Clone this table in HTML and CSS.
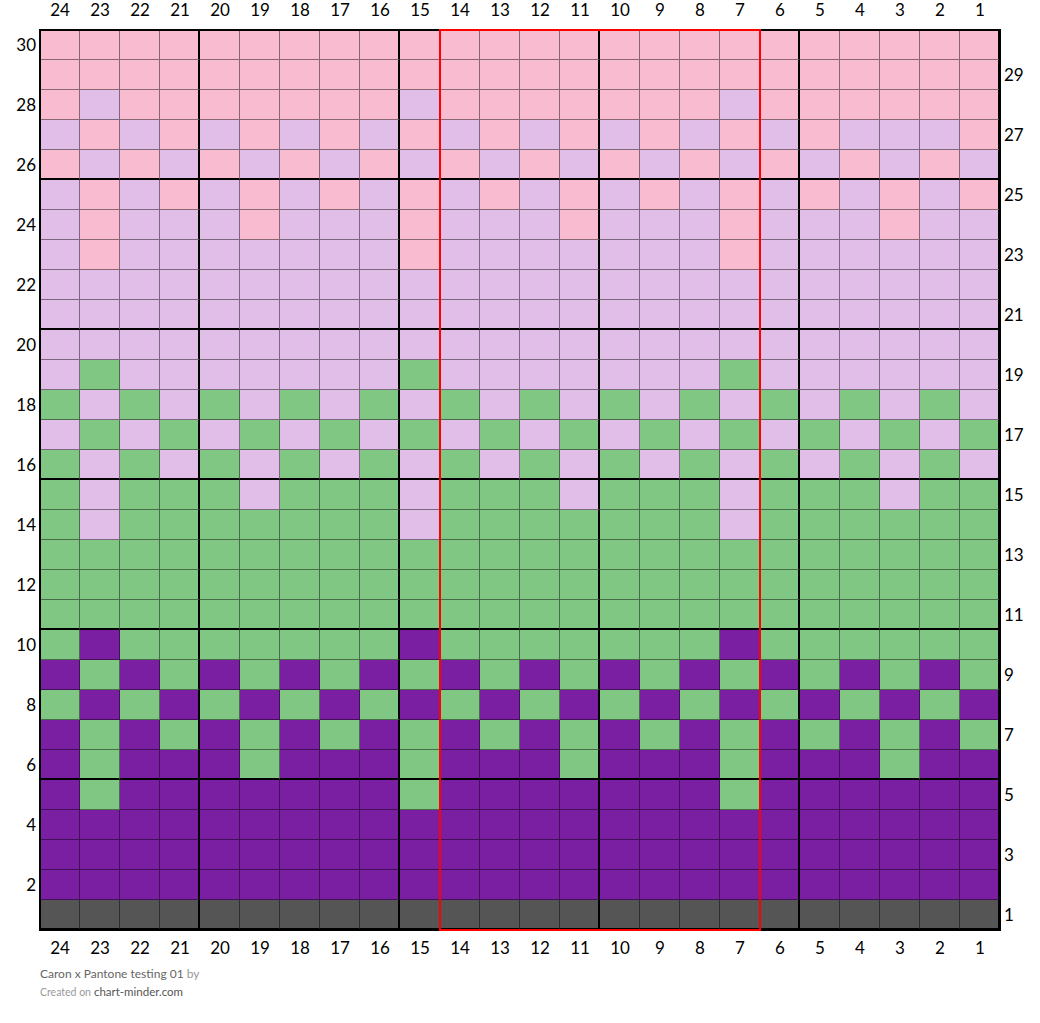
FILE: index.html
```html
<!DOCTYPE html>
<html>
<head>
<meta charset="utf-8">
<title>Caron x Pantone testing 01</title>
<link rel="stylesheet" href="styles.css">
</head>
<body>
<div class="page">
  <div class="corner"></div>
  <div class="cols top">
    <span>24</span><span>23</span><span>22</span><span>21</span><span>20</span><span>19</span><span>18</span><span>17</span><span>16</span><span>15</span><span>14</span><span>13</span><span>12</span><span>11</span><span>10</span><span>9</span><span>8</span><span>7</span><span>6</span><span>5</span><span>4</span><span>3</span><span>2</span><span>1</span>
  </div>
  <div class="corner"></div>

  <div class="rows left">
    <span>30</span><span></span><span>28</span><span></span><span>26</span><span></span><span>24</span><span></span><span>22</span><span></span><span>20</span><span></span><span>18</span><span></span><span>16</span><span></span><span>14</span><span></span><span>12</span><span></span><span>10</span><span></span><span>8</span><span></span><span>6</span><span></span><span>4</span><span></span><span>2</span><span></span>
  </div>

  <div class="chart">
    <!-- 30 -->
    <div class="r"><i class="p"></i><i class="p"></i><i class="p"></i><i class="p"></i><i class="p"></i><i class="p"></i><i class="p"></i><i class="p"></i><i class="p"></i><i class="p"></i><i class="p"></i><i class="p"></i><i class="p"></i><i class="p"></i><i class="p"></i><i class="p"></i><i class="p"></i><i class="p"></i><i class="p"></i><i class="p"></i><i class="p"></i><i class="p"></i><i class="p"></i><i class="p"></i></div>
    <!-- 29 -->
    <div class="r"><i class="p"></i><i class="p"></i><i class="p"></i><i class="p"></i><i class="p"></i><i class="p"></i><i class="p"></i><i class="p"></i><i class="p"></i><i class="p"></i><i class="p"></i><i class="p"></i><i class="p"></i><i class="p"></i><i class="p"></i><i class="p"></i><i class="p"></i><i class="p"></i><i class="p"></i><i class="p"></i><i class="p"></i><i class="p"></i><i class="p"></i><i class="p"></i></div>
    <!-- 28 -->
    <div class="r"><i class="p"></i><i class="l"></i><i class="p"></i><i class="p"></i><i class="p"></i><i class="p"></i><i class="p"></i><i class="p"></i><i class="p"></i><i class="l"></i><i class="p"></i><i class="p"></i><i class="p"></i><i class="p"></i><i class="p"></i><i class="p"></i><i class="p"></i><i class="l"></i><i class="p"></i><i class="p"></i><i class="p"></i><i class="p"></i><i class="p"></i><i class="p"></i></div>
    <!-- 27 -->
    <div class="r"><i class="l"></i><i class="p"></i><i class="l"></i><i class="p"></i><i class="l"></i><i class="p"></i><i class="l"></i><i class="p"></i><i class="l"></i><i class="p"></i><i class="l"></i><i class="p"></i><i class="l"></i><i class="p"></i><i class="l"></i><i class="p"></i><i class="l"></i><i class="p"></i><i class="l"></i><i class="p"></i><i class="l"></i><i class="l"></i><i class="l"></i><i class="p"></i></div>
    <!-- 26 -->
    <div class="r"><i class="p"></i><i class="l"></i><i class="p"></i><i class="l"></i><i class="p"></i><i class="l"></i><i class="p"></i><i class="l"></i><i class="p"></i><i class="l"></i><i class="p"></i><i class="l"></i><i class="p"></i><i class="l"></i><i class="p"></i><i class="l"></i><i class="p"></i><i class="l"></i><i class="p"></i><i class="l"></i><i class="p"></i><i class="l"></i><i class="p"></i><i class="l"></i></div>
    <!-- 25 -->
    <div class="r"><i class="l"></i><i class="p"></i><i class="l"></i><i class="p"></i><i class="l"></i><i class="p"></i><i class="l"></i><i class="p"></i><i class="l"></i><i class="p"></i><i class="l"></i><i class="p"></i><i class="l"></i><i class="p"></i><i class="l"></i><i class="p"></i><i class="l"></i><i class="p"></i><i class="l"></i><i class="p"></i><i class="l"></i><i class="p"></i><i class="l"></i><i class="p"></i></div>
    <!-- 24 -->
    <div class="r"><i class="l"></i><i class="p"></i><i class="l"></i><i class="l"></i><i class="l"></i><i class="p"></i><i class="l"></i><i class="l"></i><i class="l"></i><i class="p"></i><i class="l"></i><i class="l"></i><i class="l"></i><i class="p"></i><i class="l"></i><i class="l"></i><i class="l"></i><i class="p"></i><i class="l"></i><i class="l"></i><i class="l"></i><i class="p"></i><i class="l"></i><i class="l"></i></div>
    <!-- 23 -->
    <div class="r"><i class="l"></i><i class="p"></i><i class="l"></i><i class="l"></i><i class="l"></i><i class="l"></i><i class="l"></i><i class="l"></i><i class="l"></i><i class="p"></i><i class="l"></i><i class="l"></i><i class="l"></i><i class="l"></i><i class="l"></i><i class="l"></i><i class="l"></i><i class="p"></i><i class="l"></i><i class="l"></i><i class="l"></i><i class="l"></i><i class="l"></i><i class="l"></i></div>
    <!-- 22 -->
    <div class="r"><i class="l"></i><i class="l"></i><i class="l"></i><i class="l"></i><i class="l"></i><i class="l"></i><i class="l"></i><i class="l"></i><i class="l"></i><i class="l"></i><i class="l"></i><i class="l"></i><i class="l"></i><i class="l"></i><i class="l"></i><i class="l"></i><i class="l"></i><i class="l"></i><i class="l"></i><i class="l"></i><i class="l"></i><i class="l"></i><i class="l"></i><i class="l"></i></div>
    <!-- 21 -->
    <div class="r"><i class="l"></i><i class="l"></i><i class="l"></i><i class="l"></i><i class="l"></i><i class="l"></i><i class="l"></i><i class="l"></i><i class="l"></i><i class="l"></i><i class="l"></i><i class="l"></i><i class="l"></i><i class="l"></i><i class="l"></i><i class="l"></i><i class="l"></i><i class="l"></i><i class="l"></i><i class="l"></i><i class="l"></i><i class="l"></i><i class="l"></i><i class="l"></i></div>
    <!-- 20 -->
    <div class="r"><i class="l"></i><i class="l"></i><i class="l"></i><i class="l"></i><i class="l"></i><i class="l"></i><i class="l"></i><i class="l"></i><i class="l"></i><i class="l"></i><i class="l"></i><i class="l"></i><i class="l"></i><i class="l"></i><i class="l"></i><i class="l"></i><i class="l"></i><i class="l"></i><i class="l"></i><i class="l"></i><i class="l"></i><i class="l"></i><i class="l"></i><i class="l"></i></div>
    <!-- 19 -->
    <div class="r"><i class="l"></i><i class="g"></i><i class="l"></i><i class="l"></i><i class="l"></i><i class="l"></i><i class="l"></i><i class="l"></i><i class="l"></i><i class="g"></i><i class="l"></i><i class="l"></i><i class="l"></i><i class="l"></i><i class="l"></i><i class="l"></i><i class="l"></i><i class="g"></i><i class="l"></i><i class="l"></i><i class="l"></i><i class="l"></i><i class="l"></i><i class="l"></i></div>
    <!-- 18 -->
    <div class="r"><i class="g"></i><i class="l"></i><i class="g"></i><i class="l"></i><i class="g"></i><i class="l"></i><i class="g"></i><i class="l"></i><i class="g"></i><i class="l"></i><i class="g"></i><i class="l"></i><i class="g"></i><i class="l"></i><i class="g"></i><i class="l"></i><i class="g"></i><i class="l"></i><i class="g"></i><i class="l"></i><i class="g"></i><i class="l"></i><i class="g"></i><i class="l"></i></div>
    <!-- 17 -->
    <div class="r"><i class="l"></i><i class="g"></i><i class="l"></i><i class="g"></i><i class="l"></i><i class="g"></i><i class="l"></i><i class="g"></i><i class="l"></i><i class="g"></i><i class="l"></i><i class="g"></i><i class="l"></i><i class="g"></i><i class="l"></i><i class="g"></i><i class="l"></i><i class="g"></i><i class="l"></i><i class="g"></i><i class="l"></i><i class="g"></i><i class="l"></i><i class="g"></i></div>
    <!-- 16 -->
    <div class="r"><i class="g"></i><i class="l"></i><i class="g"></i><i class="l"></i><i class="g"></i><i class="l"></i><i class="g"></i><i class="l"></i><i class="g"></i><i class="l"></i><i class="g"></i><i class="l"></i><i class="g"></i><i class="l"></i><i class="g"></i><i class="l"></i><i class="g"></i><i class="l"></i><i class="g"></i><i class="l"></i><i class="g"></i><i class="l"></i><i class="g"></i><i class="l"></i></div>
    <!-- 15 -->
    <div class="r"><i class="g"></i><i class="l"></i><i class="g"></i><i class="g"></i><i class="g"></i><i class="l"></i><i class="g"></i><i class="g"></i><i class="g"></i><i class="l"></i><i class="g"></i><i class="g"></i><i class="g"></i><i class="l"></i><i class="g"></i><i class="g"></i><i class="g"></i><i class="l"></i><i class="g"></i><i class="g"></i><i class="g"></i><i class="l"></i><i class="g"></i><i class="g"></i></div>
    <!-- 14 -->
    <div class="r"><i class="g"></i><i class="l"></i><i class="g"></i><i class="g"></i><i class="g"></i><i class="g"></i><i class="g"></i><i class="g"></i><i class="g"></i><i class="l"></i><i class="g"></i><i class="g"></i><i class="g"></i><i class="g"></i><i class="g"></i><i class="g"></i><i class="g"></i><i class="l"></i><i class="g"></i><i class="g"></i><i class="g"></i><i class="g"></i><i class="g"></i><i class="g"></i></div>
    <!-- 13 -->
    <div class="r"><i class="g"></i><i class="g"></i><i class="g"></i><i class="g"></i><i class="g"></i><i class="g"></i><i class="g"></i><i class="g"></i><i class="g"></i><i class="g"></i><i class="g"></i><i class="g"></i><i class="g"></i><i class="g"></i><i class="g"></i><i class="g"></i><i class="g"></i><i class="g"></i><i class="g"></i><i class="g"></i><i class="g"></i><i class="g"></i><i class="g"></i><i class="g"></i></div>
    <!-- 12 -->
    <div class="r"><i class="g"></i><i class="g"></i><i class="g"></i><i class="g"></i><i class="g"></i><i class="g"></i><i class="g"></i><i class="g"></i><i class="g"></i><i class="g"></i><i class="g"></i><i class="g"></i><i class="g"></i><i class="g"></i><i class="g"></i><i class="g"></i><i class="g"></i><i class="g"></i><i class="g"></i><i class="g"></i><i class="g"></i><i class="g"></i><i class="g"></i><i class="g"></i></div>
    <!-- 11 -->
    <div class="r"><i class="g"></i><i class="g"></i><i class="g"></i><i class="g"></i><i class="g"></i><i class="g"></i><i class="g"></i><i class="g"></i><i class="g"></i><i class="g"></i><i class="g"></i><i class="g"></i><i class="g"></i><i class="g"></i><i class="g"></i><i class="g"></i><i class="g"></i><i class="g"></i><i class="g"></i><i class="g"></i><i class="g"></i><i class="g"></i><i class="g"></i><i class="g"></i></div>
    <!-- 10 -->
    <div class="r"><i class="g"></i><i class="u"></i><i class="g"></i><i class="g"></i><i class="g"></i><i class="g"></i><i class="g"></i><i class="g"></i><i class="g"></i><i class="u"></i><i class="g"></i><i class="g"></i><i class="g"></i><i class="g"></i><i class="g"></i><i class="g"></i><i class="g"></i><i class="u"></i><i class="g"></i><i class="g"></i><i class="g"></i><i class="g"></i><i class="g"></i><i class="g"></i></div>
    <!-- 9 -->
    <div class="r"><i class="u"></i><i class="g"></i><i class="u"></i><i class="g"></i><i class="u"></i><i class="g"></i><i class="u"></i><i class="g"></i><i class="u"></i><i class="g"></i><i class="u"></i><i class="g"></i><i class="u"></i><i class="g"></i><i class="u"></i><i class="g"></i><i class="u"></i><i class="g"></i><i class="u"></i><i class="g"></i><i class="u"></i><i class="g"></i><i class="u"></i><i class="g"></i></div>
    <!-- 8 -->
    <div class="r"><i class="g"></i><i class="u"></i><i class="g"></i><i class="u"></i><i class="g"></i><i class="u"></i><i class="g"></i><i class="u"></i><i class="g"></i><i class="u"></i><i class="g"></i><i class="u"></i><i class="g"></i><i class="u"></i><i class="g"></i><i class="u"></i><i class="g"></i><i class="u"></i><i class="g"></i><i class="u"></i><i class="g"></i><i class="u"></i><i class="g"></i><i class="u"></i></div>
    <!-- 7 -->
    <div class="r"><i class="u"></i><i class="g"></i><i class="u"></i><i class="g"></i><i class="u"></i><i class="g"></i><i class="u"></i><i class="g"></i><i class="u"></i><i class="g"></i><i class="u"></i><i class="g"></i><i class="u"></i><i class="g"></i><i class="u"></i><i class="g"></i><i class="u"></i><i class="g"></i><i class="u"></i><i class="g"></i><i class="u"></i><i class="g"></i><i class="u"></i><i class="g"></i></div>
    <!-- 6 -->
    <div class="r"><i class="u"></i><i class="g"></i><i class="u"></i><i class="u"></i><i class="u"></i><i class="g"></i><i class="u"></i><i class="u"></i><i class="u"></i><i class="g"></i><i class="u"></i><i class="u"></i><i class="u"></i><i class="g"></i><i class="u"></i><i class="u"></i><i class="u"></i><i class="g"></i><i class="u"></i><i class="u"></i><i class="u"></i><i class="g"></i><i class="u"></i><i class="u"></i></div>
    <!-- 5 -->
    <div class="r"><i class="u"></i><i class="g"></i><i class="u"></i><i class="u"></i><i class="u"></i><i class="u"></i><i class="u"></i><i class="u"></i><i class="u"></i><i class="g"></i><i class="u"></i><i class="u"></i><i class="u"></i><i class="u"></i><i class="u"></i><i class="u"></i><i class="u"></i><i class="g"></i><i class="u"></i><i class="u"></i><i class="u"></i><i class="u"></i><i class="u"></i><i class="u"></i></div>
    <!-- 4 -->
    <div class="r"><i class="u"></i><i class="u"></i><i class="u"></i><i class="u"></i><i class="u"></i><i class="u"></i><i class="u"></i><i class="u"></i><i class="u"></i><i class="u"></i><i class="u"></i><i class="u"></i><i class="u"></i><i class="u"></i><i class="u"></i><i class="u"></i><i class="u"></i><i class="u"></i><i class="u"></i><i class="u"></i><i class="u"></i><i class="u"></i><i class="u"></i><i class="u"></i></div>
    <!-- 3 -->
    <div class="r"><i class="u"></i><i class="u"></i><i class="u"></i><i class="u"></i><i class="u"></i><i class="u"></i><i class="u"></i><i class="u"></i><i class="u"></i><i class="u"></i><i class="u"></i><i class="u"></i><i class="u"></i><i class="u"></i><i class="u"></i><i class="u"></i><i class="u"></i><i class="u"></i><i class="u"></i><i class="u"></i><i class="u"></i><i class="u"></i><i class="u"></i><i class="u"></i></div>
    <!-- 2 -->
    <div class="r"><i class="u"></i><i class="u"></i><i class="u"></i><i class="u"></i><i class="u"></i><i class="u"></i><i class="u"></i><i class="u"></i><i class="u"></i><i class="u"></i><i class="u"></i><i class="u"></i><i class="u"></i><i class="u"></i><i class="u"></i><i class="u"></i><i class="u"></i><i class="u"></i><i class="u"></i><i class="u"></i><i class="u"></i><i class="u"></i><i class="u"></i><i class="u"></i></div>
    <!-- 1 -->
    <div class="r"><i class="k"></i><i class="k"></i><i class="k"></i><i class="k"></i><i class="k"></i><i class="k"></i><i class="k"></i><i class="k"></i><i class="k"></i><i class="k"></i><i class="k"></i><i class="k"></i><i class="k"></i><i class="k"></i><i class="k"></i><i class="k"></i><i class="k"></i><i class="k"></i><i class="k"></i><i class="k"></i><i class="k"></i><i class="k"></i><i class="k"></i><i class="k"></i></div>
    <div class="repeat"></div>
  </div>

  <div class="rows right">
    <span></span><span>29</span><span></span><span>27</span><span></span><span>25</span><span></span><span>23</span><span></span><span>21</span><span></span><span>19</span><span></span><span>17</span><span></span><span>15</span><span></span><span>13</span><span></span><span>11</span><span></span><span>9</span><span></span><span>7</span><span></span><span>5</span><span></span><span>3</span><span></span><span>1</span>
  </div>

  <div class="corner"></div>
  <div class="cols bottom">
    <span>24</span><span>23</span><span>22</span><span>21</span><span>20</span><span>19</span><span>18</span><span>17</span><span>16</span><span>15</span><span>14</span><span>13</span><span>12</span><span>11</span><span>10</span><span>9</span><span>8</span><span>7</span><span>6</span><span>5</span><span>4</span><span>3</span><span>2</span><span>1</span>
  </div>
  <div class="corner"></div>
</div>
<div class="footer">
  <div class="title">Caron x Pantone testing 01 <span class="muted">by</span></div>
  <div class="credit"><span class="muted">Created on</span> chart-minder.com</div>
</div>
</body>
</html>
```

FILE: styles.css
```css
html, body {
  margin: 0;
  padding: 0;
  background: #fff;
}

body {
  font-family: Lato, "Open Sans", sans-serif;
  color: #000;
}

.page {
  display: grid;
  grid-template-columns: 40px 960px 40px;
  grid-template-rows: 30px 900px 36px;
}

.cols {
  display: flex;
  font-size: 17px;
}

.cols span {
  width: 40px;
  text-align: center;
  line-height: 20px;
}

.cols.bottom {
  padding-top: 8px;
}

.rows {
  display: flex;
  flex-direction: column;
  font-size: 17px;
}

.rows span {
  height: 30px;
  line-height: 30px;
}

.rows.left span {
  text-align: right;
  padding-right: 4px;
}

.rows.right span {
  padding-left: 4px;
}

.chart {
  position: relative;
  width: 960px;
  height: 900px;
  outline: 2px solid #000;
  outline-offset: -1px;
  display: flex;
  flex-direction: column;
}

.r {
  display: flex;
  height: 30px;
}

.r i {
  display: block;
  box-sizing: border-box;
  width: 40px;
  height: 30px;
  border-right: 1px solid rgba(0, 0, 0, 0.45);
  border-bottom: 1px solid rgba(0, 0, 0, 0.45);
}

.r i:nth-child(5n+4) {
  border-right: 2px solid #000;
}

.r:nth-child(5n) i {
  border-bottom: 2px solid #000;
}

.p { background: #f8bbd0; }
.l { background: #e1bee7; }
.g { background: #81c784; }
.u { background: #7b1fa2; }
.k { background: #555555; }

.repeat {
  position: absolute;
  left: 399px;
  top: -1px;
  width: 322px;
  height: 902px;
  box-sizing: border-box;
  border: 2px solid #ff0000;
  z-index: 2;
}

.footer {
  padding-left: 40px;
}

.title {
  font-size: 12px;
  color: #666;
  line-height: 16px;
}

.credit {
  font-size: 11.5px;
  color: #555;
  line-height: 20px;
}

.muted {
  color: #999;
}

.credit .muted {
  font-size: 10.5px;
}
```
